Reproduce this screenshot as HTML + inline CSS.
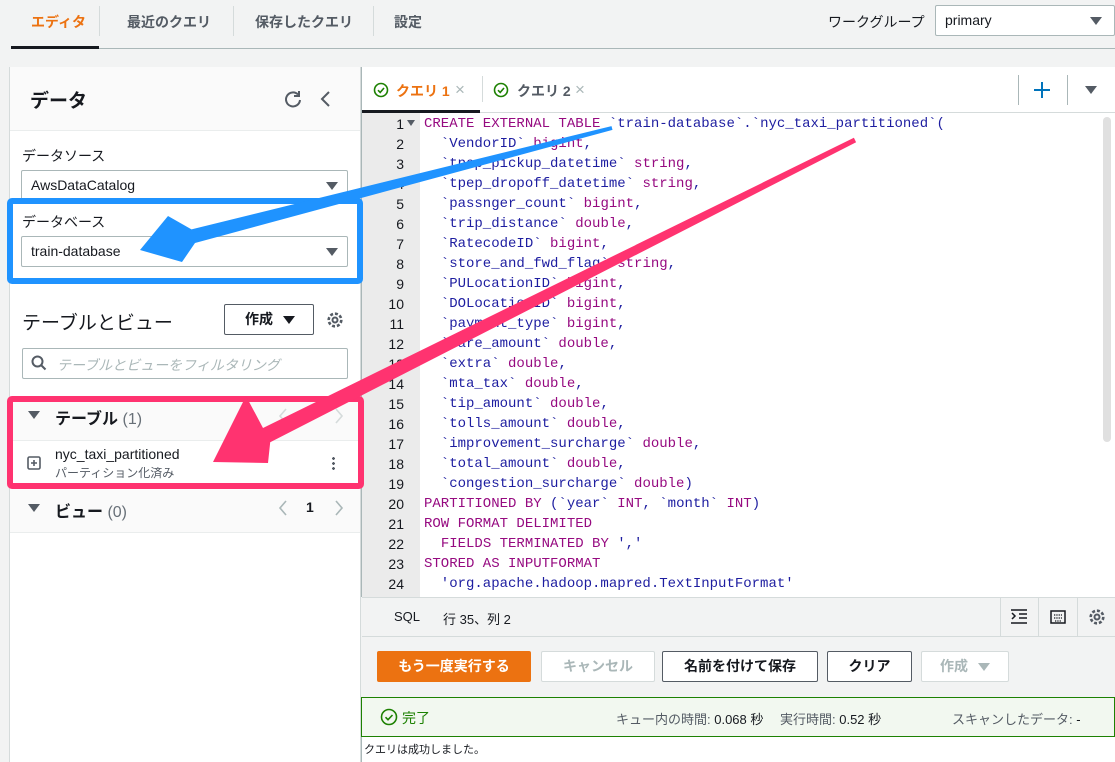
<!DOCTYPE html>
<html><head><meta charset="utf-8">
<style>
*{box-sizing:border-box;margin:0;padding:0}
body{width:1115px;height:762px;overflow:hidden;background:#f2f3f3;font-family:"Liberation Sans","Noto Sans CJK JP",sans-serif;color:#16191f;position:relative;font-size:14px}
.a{position:absolute}
.tab{position:absolute;top:12px;font-size:14px;font-weight:bold;color:#545b64}
.sep{position:absolute;top:6px;width:1px;height:30px;background:#d5dbdb}
.sel{position:absolute;background:#fff;border:1px solid #aab7b8;border-radius:2px;height:31px;padding:0 9px;line-height:29px;font-size:14px}
.tri{position:absolute;width:0;height:0;border-left:6px solid transparent;border-right:6px solid transparent;border-top:8px solid #545b64}
.btn{position:absolute;height:31px;border:1px solid #545b64;border-radius:2px;background:#fff;font-weight:bold;font-size:14px;text-align:center;line-height:29px;color:#16191f}
.code{position:absolute;left:424px;top:114px;font-family:"Liberation Mono",monospace;font-size:14px;line-height:20px;white-space:pre;color:#1d1da0}
.ln{position:absolute;left:362px;top:114px;width:42px;text-align:right;font-family:"Liberation Sans",sans-serif;font-size:14px;line-height:20px;color:#16191f;white-space:pre}
.k{color:#960a80}
</style></head><body>
<div class="tab" style="left:31px;color:#ec7211">エディタ</div>
<div class="sep" style="left:99px"></div>
<div class="tab" style="left:127px">最近のクエリ</div>
<div class="sep" style="left:233px"></div>
<div class="tab" style="left:255px">保存したクエリ</div>
<div class="sep" style="left:373px"></div>
<div class="tab" style="left:394px">設定</div>
<div class="a" style="left:11px;top:48px;width:1104px;height:1px;background:#aab7b8"></div>
<div class="a" style="left:11px;top:46px;width:88px;height:3px;background:#16191f"></div>
<div class="a" style="left:828px;top:12px;font-size:14px;color:#16191f">ワークグループ</div>
<div class="sel" style="left:935px;top:5px;width:180px">primary</div>
<div class="tri" style="left:1090px;top:17px"></div>

<div class="a" style="left:9px;top:67px;width:352px;height:695px;background:#fff;border-left:1px solid #d5dbdb;border-right:1px solid #d5dbdb"></div>
<div class="a" style="left:10px;top:67px;width:350px;height:64px;background:#fafafa;border-bottom:1px solid #eaeded"></div>
<div class="a" style="left:30px;top:86px;font-size:19px;font-weight:bold">データ</div>
<svg class="a" style="left:283px;top:89px" width="20" height="20" viewBox="0 0 20 20"><path d="M15 5.5A7 7 0 1 0 17 11" fill="none" stroke="#545b64" stroke-width="2"/><path d="M16 2v5h-5" fill="none" stroke="#545b64" stroke-width="2"/></svg>
<svg class="a" style="left:318px;top:89px" width="14" height="20"><path d="M11 3L4 10l7 7" fill="none" stroke="#545b64" stroke-width="2"/></svg>
<div class="a" style="left:22px;top:146px;font-size:14px">データソース</div>
<div class="sel" style="left:21px;top:170px;width:327px">AwsDataCatalog</div>
<div class="tri" style="left:326px;top:182px"></div>
<div class="a" style="left:22px;top:212px;font-size:14px">データベース</div>
<div class="sel" style="left:21px;top:236px;width:327px">train-database</div>
<div class="tri" style="left:326px;top:248px"></div>
<div class="a" style="left:22px;top:308px;font-size:19px">テーブルとビュー</div>
<div class="btn" style="left:224px;top:304px;width:90px;text-align:left;padding-left:20px">作成</div>
<div class="tri" style="left:283px;top:316px;border-top-color:#16191f"></div>
<svg class="a" style="left:326px;top:311px" width="18" height="18" viewBox="0 0 18 18"><circle cx="9" cy="9" r="2.5" fill="none" stroke="#545b64" stroke-width="2"/><circle cx="9" cy="9" r="6.3" fill="none" stroke="#545b64" stroke-width="2.6" stroke-dasharray="3 1.9"/></svg>
<div class="sel" style="left:22px;top:348px;width:326px;height:31px"></div>
<svg class="a" style="left:31px;top:355px" width="16" height="16"><circle cx="6.5" cy="6.5" r="5" fill="none" stroke="#545b64" stroke-width="2"/><path d="M10 10l4.5 4.5" stroke="#545b64" stroke-width="2"/></svg>
<div class="a" style="left:57px;top:355px;font-size:14px;font-style:italic;color:#aab7b8">テーブルとビューをフィルタリング</div>

<div class="a" style="left:10px;top:397px;width:350px;height:44px;background:#fafafa;border-bottom:1px solid #eaeded"></div>
<div class="tri" style="left:28px;top:411px;border-width:8px 6px 0 6px"></div>
<div class="a" style="left:55px;top:405px;font-size:16px;font-weight:bold">テーブル <span style="font-weight:normal;color:#687078">(1)</span></div>
<svg class="a" style="left:276px;top:407px" width="70" height="18"><path d="M10 2L4 9l6 7M60 2l6 7-6 7" fill="none" stroke="#d5dbdb" stroke-width="1.6"/></svg>
<svg class="a" style="left:27px;top:456px" width="14" height="14"><rect x="1" y="1" width="12" height="12" rx="1.5" fill="none" stroke="#545b64" stroke-width="1.6"/><path d="M7 4v6M4 7h6" stroke="#545b64" stroke-width="1.6"/></svg>
<div class="a" style="left:55px;top:446px;font-size:14px">nyc_taxi_partitioned</div>
<div class="a" style="left:55px;top:464px;font-size:12px;color:#545b64">パーティション化済み</div>
<div class="a" style="left:332px;top:456px;width:3px;height:14px;background:radial-gradient(circle,#545b64 1.3px,transparent 1.5px) 0 0/3px 5px"></div>

<div class="a" style="left:10px;top:490px;width:350px;height:43px;background:#fafafa;border-bottom:1px solid #eaeded"></div>
<div class="tri" style="left:28px;top:504px;border-width:8px 6px 0 6px"></div>
<div class="a" style="left:55px;top:498px;font-size:16px;font-weight:bold">ビュー <span style="font-weight:normal;color:#687078">(0)</span></div>
<svg class="a" style="left:276px;top:499px" width="70" height="18"><path d="M10 2L4 9l6 7M60 2l6 7-6 7" fill="none" stroke="#aab7b8" stroke-width="1.6"/></svg>
<div class="a" style="left:306px;top:499px;font-size:14px;font-weight:bold">1</div>

<div class="a" style="left:361px;top:67px;width:754px;height:530px;background:#fff;border-left:1px solid #aab7b8"></div>
<div class="a" style="left:362px;top:112px;width:753px;height:1px;background:#d5dbdb"></div>
<div class="a" style="left:362px;top:110px;width:118px;height:3px;background:#16191f"></div>
<svg class="a" style="left:373px;top:82px" width="16" height="16"><circle cx="8" cy="8" r="6.5" fill="none" stroke="#1d8102" stroke-width="1.6"/><path d="M5 8.2l2.2 2.2L11 6" fill="none" stroke="#1d8102" stroke-width="1.6"/></svg>
<div class="a" style="left:396px;top:81px;font-weight:bold;color:#ec7211">クエリ 1</div>
<div class="a" style="left:455px;top:80px;color:#aab7b8;font-size:17px">×</div>
<div class="a" style="left:482px;top:76px;width:1px;height:26px;background:#d5dbdb"></div>
<svg class="a" style="left:493px;top:82px" width="16" height="16"><circle cx="8" cy="8" r="6.5" fill="none" stroke="#1d8102" stroke-width="1.6"/><path d="M5 8.2l2.2 2.2L11 6" fill="none" stroke="#1d8102" stroke-width="1.6"/></svg>
<div class="a" style="left:517px;top:81px;font-weight:bold;color:#545b64">クエリ 2</div>
<div class="a" style="left:575px;top:80px;color:#aab7b8;font-size:17px">×</div>
<div class="a" style="left:1018px;top:75px;width:1px;height:30px;background:#aab7b8"></div>
<div class="a" style="left:1067px;top:75px;width:1px;height:30px;background:#aab7b8"></div>
<svg class="a" style="left:1033px;top:81px" width="18" height="18"><path d="M9 1v16M1 9h16" stroke="#0073bb" stroke-width="2"/></svg>
<div class="tri" style="left:1085px;top:86px"></div>
<div class="a" style="left:362px;top:113px;width:58px;height:484px;background:#ebebeb"></div>
<div class="a" style="left:1103px;top:117px;width:8px;height:325px;background:#e0e0e0;border-radius:4px"></div>
<div class="ln">1
2
3
4
5
6
7
8
9
10
11
12
13
14
15
16
17
18
19
20
21
22
23
24</div>
<div class="a" style="left:407px;top:120px;border-left:4px solid transparent;border-right:4px solid transparent;border-top:6px solid #545b64"></div>
<div class="code"><span class="k">CREATE EXTERNAL TABLE</span> `train-database`.`nyc_taxi_partitioned`(
  `VendorID` <span class="k">bigint</span>,
  `tpep_pickup_datetime` <span class="k">string</span>,
  `tpep_dropoff_datetime` <span class="k">string</span>,
  `passnger_count` <span class="k">bigint</span>,
  `trip_distance` <span class="k">double</span>,
  `RatecodeID` <span class="k">bigint</span>,
  `store_and_fwd_flag` <span class="k">string</span>,
  `PULocationID` <span class="k">bigint</span>,
  `DOLocationID` <span class="k">bigint</span>,
  `payment_type` <span class="k">bigint</span>,
  `fare_amount` <span class="k">double</span>,
  `extra` <span class="k">double</span>,
  `mta_tax` <span class="k">double</span>,
  `tip_amount` <span class="k">double</span>,
  `tolls_amount` <span class="k">double</span>,
  `improvement_surcharge` <span class="k">double</span>,
  `total_amount` <span class="k">double</span>,
  `congestion_surcharge` <span class="k">double</span>)
<span class="k">PARTITIONED BY</span> (`year` <span class="k">INT</span>, `month` <span class="k">INT</span>)
<span class="k">ROW FORMAT DELIMITED</span>
  <span class="k">FIELDS TERMINATED BY</span> ','
<span class="k">STORED AS INPUTFORMAT</span>
  'org.apache.hadoop.mapred.TextInputFormat'</div>
<div class="a" style="left:362px;top:597px;width:753px;height:40px;background:#f2f3f3;border-top:1px solid #d5dbdb;border-bottom:1px solid #d5dbdb"></div>
<div class="a" style="left:394px;top:609px;font-size:13px">SQL</div>
<div class="a" style="left:443px;top:609px;font-size:13px">行 35、列 2</div>
<div class="a" style="left:1000px;top:597px;width:1px;height:40px;background:#d5dbdb"></div>
<div class="a" style="left:1038px;top:597px;width:1px;height:40px;background:#d5dbdb"></div>
<div class="a" style="left:1077px;top:597px;width:1px;height:40px;background:#d5dbdb"></div>
<svg class="a" style="left:1010px;top:609px" width="18" height="16"><path d="M1 1h16M9 5h8M9 9h8M1 14h16M2 4l3 3-3 3" fill="none" stroke="#16191f" stroke-width="1.5"/></svg>
<svg class="a" style="left:1050px;top:610px" width="16" height="14"><rect x="1" y="1" width="14" height="12" fill="none" stroke="#16191f" stroke-width="1.5"/><path d="M4 5h8M4 8h8M5 11h6" stroke="#16191f" stroke-width="1.3" stroke-dasharray="1.3 1"/></svg>
<svg class="a" style="left:1088px;top:608px" width="18" height="18" viewBox="0 0 18 18"><circle cx="9" cy="9" r="2.5" fill="none" stroke="#545b64" stroke-width="2"/><circle cx="9" cy="9" r="6.3" fill="none" stroke="#545b64" stroke-width="2.6" stroke-dasharray="3 1.9"/></svg>
<div class="a" style="left:362px;top:638px;width:753px;height:60px;background:#f2f3f3"></div>
<div class="btn" style="left:377px;top:651px;width:154px;background:#ec7211;border-color:#ec7211;color:#fff">もう一度実行する</div>
<div class="btn" style="left:541px;top:651px;width:114px;border-color:#d5dbdb;color:#aab7b8">キャンセル</div>
<div class="btn" style="left:662px;top:651px;width:156px">名前を付けて保存</div>
<div class="btn" style="left:827px;top:651px;width:85px">クリア</div>
<div class="btn" style="left:921px;top:651px;width:88px;border-color:#d5dbdb;color:#aab7b8;text-align:left;padding-left:18px">作成</div>
<div class="tri" style="left:978px;top:663px;border-top-color:#aab7b8"></div>
<div class="a" style="left:361px;top:697px;width:754px;height:40px;background:#f2f8f0;border:1px solid #1d8102"></div>
<svg class="a" style="left:380px;top:708px" width="18" height="18"><circle cx="9" cy="9" r="7.5" fill="none" stroke="#1d8102" stroke-width="1.6"/><path d="M5.5 9.2l2.5 2.5L12.5 7" fill="none" stroke="#1d8102" stroke-width="1.6"/></svg>
<div class="a" style="left:402px;top:708px;color:#1d8102">完了</div>
<div class="a" style="left:616px;top:709px;font-size:13px;color:#545b64">キュー内の時間: <span style="color:#16191f">0.068 秒</span></div>
<div class="a" style="left:780px;top:709px;font-size:13px;color:#545b64">実行時間: <span style="color:#16191f">0.52 秒</span></div>
<div class="a" style="left:952px;top:709px;font-size:13px;color:#545b64">スキャンしたデータ: <span style="color:#16191f">-</span></div>
<div class="a" style="left:361px;top:737px;width:754px;height:25px;background:#fff;border-left:1px solid #aab7b8"></div>
<div class="a" style="left:364px;top:741px;font-size:11px">クエリは成功しました。</div>

<svg class="a" style="left:0;top:0" width="1115" height="762">
<rect x="10" y="201" width="350" height="80" fill="none" stroke="#1f93ff" stroke-width="6" rx="2"/>
<rect x="10" y="399" width="351" height="87" fill="none" stroke="#ff3370" stroke-width="6" rx="2"/>
<polygon points="611.5,126.1 191.5,229.4 168,216 140,250 182,262 195,243 612.5,129.9" fill="#1f93ff"/>
<polygon points="853.9,137.8 263,428 246,396 213,462 268,463 270.2,442.3 856.1,142.2" fill="#ff3370"/>
</svg>
</body></html>
